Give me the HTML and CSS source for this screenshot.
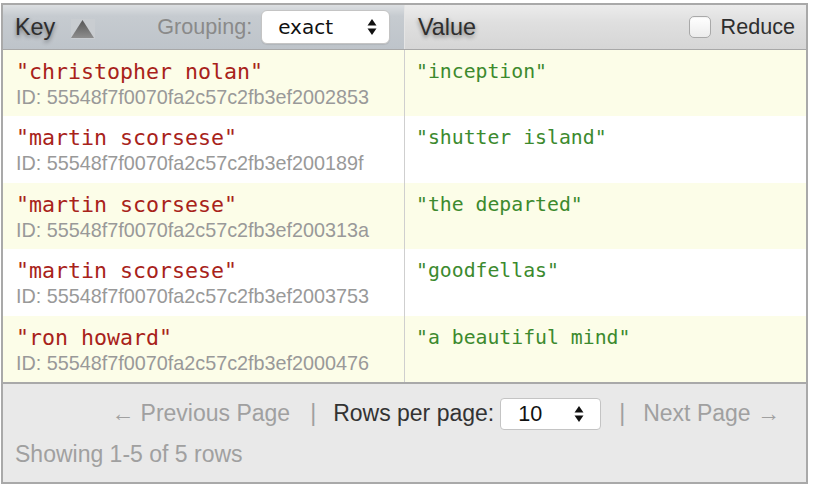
FILE: index.html
```html
<!DOCTYPE html>
<html>
<head>
<meta charset="utf-8">
<link rel="stylesheet" href="styles.css">
</head>
<body>
<div class="panel">
  <div class="head">
    <div class="hcell hkey">
      <span class="htitle">Key</span>
      <span class="sort"><svg width="24" height="20" viewBox="0 0 24 20"><defs><linearGradient id="tg" x1="0" y1="0" x2="0" y2="1"><stop offset="0" stop-color="#555555"/><stop offset="1" stop-color="#8e8e8e"/></linearGradient></defs><polygon points="11.5,1 23,19 0,19" fill="url(#tg)"/></svg></span>
      <span class="grp">Grouping:</span>
      <span class="select hsel"><span class="seltext">exact</span><svg class="arrows" width="10" height="18" viewBox="0 0 10 18"><polygon points="5,1 9.5,7.5 0.5,7.5" fill="#111"/><polygon points="0.5,10.5 9.5,10.5 5,17" fill="#111"/></svg></span>
    </div>
    <div class="hcell hval">
      <span class="htitle">Value</span>
      <label class="reduce"><span class="cb"></span><span>Reduce</span></label>
    </div>
  </div>

  <div class="row odd">
    <div class="kcell"><div class="key">"christopher nolan"</div><div class="id">ID: 55548f7f0070fa2c57c2fb3ef2002853</div></div>
    <div class="vcell">"inception"</div>
  </div>
  <div class="row">
    <div class="kcell"><div class="key">"martin scorsese"</div><div class="id">ID: 55548f7f0070fa2c57c2fb3ef200189f</div></div>
    <div class="vcell">"shutter island"</div>
  </div>
  <div class="row odd">
    <div class="kcell"><div class="key">"martin scorsese"</div><div class="id">ID: 55548f7f0070fa2c57c2fb3ef200313a</div></div>
    <div class="vcell">"the departed"</div>
  </div>
  <div class="row">
    <div class="kcell"><div class="key">"martin scorsese"</div><div class="id">ID: 55548f7f0070fa2c57c2fb3ef2003753</div></div>
    <div class="vcell">"goodfellas"</div>
  </div>
  <div class="row odd last">
    <div class="kcell"><div class="key">"ron howard"</div><div class="id">ID: 55548f7f0070fa2c57c2fb3ef2000476</div></div>
    <div class="vcell">"a beautiful mind"</div>
  </div>

  <div class="foot">
    <div class="pager">
      <span class="muted">← Previous Page</span>
      <span class="pipe">|</span>
      <span class="rpp">Rows per page:</span>
      <span class="select fsel"><span class="seltext">10</span><svg class="arrows" width="10" height="18" viewBox="0 0 10 18"><polygon points="5,1 9.5,7.5 0.5,7.5" fill="#111"/><polygon points="0.5,10.5 9.5,10.5 5,17" fill="#111"/></svg></span>
      <span class="pipe pipe2">|</span>
      <span class="muted">Next Page →</span>
    </div>
    <div class="showing">Showing 1-5 of 5 rows</div>
  </div>
</div>
</body>
</html>
```

FILE: styles.css
```css
html, body {
  margin: 0;
  padding: 0;
  background: #ffffff;
}
body {
  font-family: "Liberation Sans", Arial, sans-serif;
}
.panel {
  margin: 3px 0 0 1px;
  width: 803px;
  border: 2px solid #a9a9a9;
  box-sizing: content-box;
}
.head {
  display: grid;
  grid-template-columns: 402px 1fr;
  height: 44px;
  border-bottom: 1px solid #a8a8a8;
}
.hcell {
  display: flex;
  align-items: center;
  box-sizing: border-box;
}
.hkey {
  background: linear-gradient(#dcdfe2, #c6cbd0 25%, #bec4ca);
  border-right: 1px solid #e4e4e4;
  padding-left: 12px;
}
.hval {
  background: linear-gradient(#ececec, #dfdfdf 40%, #d6d6d6);
  padding-left: 13px;
  padding-right: 11px;
}
.htitle {
  font-size: 23.4px;
  color: #2e2e2e;
  text-shadow: 0 2px 4px rgba(0, 0, 0, 0.45);
}
.sort {
  display: flex;
  margin-left: 16px;
  margin-top: 3px;
  background: #c9cdd1;
}
.sort svg {
  display: block;
}
.grp {
  font-size: 21.6px;
  color: #8a8a8a;
  margin-left: 62px;
}
.select {
  display: flex;
  align-items: center;
  box-sizing: border-box;
  background: #ffffff;
  border: 1px solid #c4c4c4;
  border-radius: 6px;
}
.hsel {
  margin-left: 9px;
  width: 129px;
  height: 34px;
  padding-left: 16px;
  padding-right: 12px;
  box-shadow: 0 1px 1px rgba(0, 0, 0, 0.08);
}
.seltext {
  font-family: "DejaVu Sans", sans-serif;
  font-size: 20px;
  color: #111111;
  flex: 1;
}
.arrows {
  display: block;
}
.reduce {
  margin-left: auto;
  display: flex;
  align-items: center;
  font-size: 21.6px;
  color: #2e2e2e;
}
.cb {
  width: 22px;
  height: 22px;
  box-sizing: border-box;
  border: 1px solid #a9a9a9;
  border-radius: 5px;
  background: linear-gradient(#ffffff, #ececec);
  box-shadow: inset 0 1px 1px rgba(0, 0, 0, 0.05);
  margin-right: 10px;
}
.row {
  display: grid;
  grid-template-columns: 402px 1fr;
  height: 66.4px;
  background: #ffffff;
}
.row.odd {
  background: #fcfde8;
}
.kcell {
  box-sizing: border-box;
  border-right: 1px solid #cfcfcf;
  padding: 9px 0 0 13px;
}
.vcell {
  padding: 9px 0 0 11px;
  font-family: "DejaVu Sans Mono", monospace;
  font-size: 19.8px;
  line-height: 26px;
  color: #3c8a2e;
}
.key {
  font-family: "DejaVu Sans Mono", monospace;
  font-size: 21.6px;
  line-height: 26px;
  color: #a8221a;
}
.id {
  font-size: 19.8px;
  line-height: 24px;
  color: #999999;
}
.foot {
  border-top: 2px solid #a9a9a9;
  background: #e9e9e9;
  height: 100px;
  box-sizing: border-box;
  padding: 14px 26px 0 12px;
}
.pager {
  display: flex;
  justify-content: flex-end;
  align-items: center;
  height: 32px;
  font-size: 23px;
}
.muted {
  color: #a0a0a0;
}
.pipe {
  color: #a0a0a0;
  margin: 0 17px 0 20px;
}
.pipe2 {
  margin: 0 18px 0 18px;
}
.rpp {
  color: #333333;
}
.fsel {
  margin-left: 6px;
  width: 101px;
  height: 32px;
  padding-left: 17px;
  padding-right: 16px;
  border-radius: 4px;
}
.fsel .seltext {
  font-family: "Liberation Sans", Arial, sans-serif;
  font-size: 21.6px;
}
.showing {
  margin-top: 10px;
  font-size: 23px;
  line-height: 28px;
  color: #a0a0a0;
}
```
